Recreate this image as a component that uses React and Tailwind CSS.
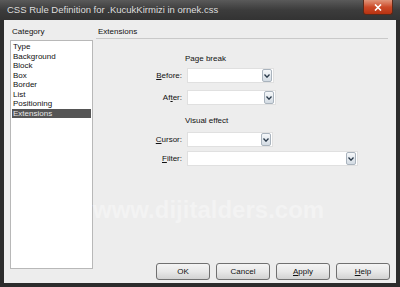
import React from "react";

function Arrow() {
  return (
    <div className="w-[10px] h-[13px] my-auto mr-px border border-[#a9b3bd] rounded-[2px] bg-gradient-to-b from-[#f6f8fa] to-[#d3dbe3] flex items-center justify-center">
      <svg width="6" height="4" viewBox="0 0 6 4">
        <path d="M0.5 0.5 L3 3.2 L5.5 0.5" fill="none" stroke="#2a3a4a" strokeWidth="1.3" />
      </svg>
    </div>
  );
}

function Select({ className }) {
  return (
    <div className={"flex h-[15px] bg-white border border-[#e0e0e0] " + className}>
      <div className="flex-1" />
      <Arrow />
    </div>
  );
}

function Row({ label, selectClass, className }) {
  return (
    <div className={"flex items-center " + className}>
      <div className="w-[90px] text-right pr-px">{label}</div>
      <div className="w-[4px]" />
      <Select className={selectClass} />
    </div>
  );
}

function Btn({ children }) {
  return (
    <div className="w-[54px] h-[17px] rounded-[3px] border border-[#707070] bg-gradient-to-b from-[#f4f4f4] via-[#e8e8e8] to-[#d2d2d2] flex items-center justify-center text-[#111]">
      {children}
    </div>
  );
}

export default function App() {
  const items = ["Type", "Background", "Block", "Box", "Border", "List", "Positioning"];
  return (
    <div className="w-[400px] h-[287px] bg-[#2c2c2c] flex flex-col font-['Liberation_Sans',Arial,sans-serif] text-[8px] leading-[10px] text-[#111] overflow-hidden">
      {/* title bar */}
      <div className="relative h-[20px] flex items-center pl-[7px] bg-gradient-to-b from-[#5a5a5a] via-[#3c3c3c] to-[#333333]">
        <span className="text-[#dedede] text-[9.5px] leading-[12px]">
          CSS Rule Definition for .KucukKirmizi in ornek.css
        </span>
        <div className="absolute left-[363px] top-0 w-[30px] h-[15px] rounded-b-[3px] border border-t-0 border-[#5a2a1a] bg-gradient-to-b from-[#e0957a] via-[#cc4a28] to-[#b83210] flex items-center justify-center">
          <svg width="8" height="7" viewBox="0 0 8 7">
            <path d="M1 0.5 L7 6.5 M7 0.5 L1 6.5" stroke="#fff" strokeWidth="1.6" />
          </svg>
        </div>
      </div>

      {/* client */}
      <div className="relative flex-1 mx-[4px] mb-[4px] bg-[#ededed] flex">
        {/* left column */}
        <div className="pl-[6px] flex flex-col">
          <div className="h-[20px] pt-[7px] pl-[2px]">Category</div>
          <div className="w-[83px] h-[229px] bg-white border border-[#b8b8b8] pt-px px-px">
            {items.map((t) => (
              <div key={t} className="h-[9.5px] leading-[9.5px] pl-px">
                {t}
              </div>
            ))}
            <div className="h-[9.5px] leading-[9.5px] pl-px bg-[#555555] text-[#e8e8e8]">Extensions</div>
          </div>
        </div>

        {/* right column */}
        <div className="flex-1 flex flex-col">
          <div className="h-[18px] pt-[7px] pl-[5px]">Extensions</div>
          <div className="h-px bg-[#c9c9c9] ml-[3px] mr-[8px]" />

          <div className="pl-[92px] mt-[15px] h-[10px]">Page break</div>
          <Row
            className="mt-[4px]"
            label={<><span className="underline">B</span>efore:</>}
            selectClass="w-[87px]"
          />
          <Row
            className="mt-[7px]"
            label={<>Af<span className="underline">t</span>er:</>}
            selectClass="w-[89px]"
          />
          <div className="pl-[92px] mt-[11px] h-[10px]">Visual effect</div>
          <Row
            className="mt-[6px]"
            label={<><span className="underline">C</span>ursor:</>}
            selectClass="w-[86px]"
          />
          <Row
            className="mt-[4px]"
            label={<><span className="underline">F</span>ilter:</>}
            selectClass="w-[171px]"
          />

          <div className="flex-1" />
          <div className="flex justify-end gap-[6px] pr-[6px] pb-[3px]">
            <Btn>OK</Btn>
            <Btn>Cancel</Btn>
            <Btn>
              <span className="underline">A</span>pply
            </Btn>
            <Btn>
              <span className="underline">H</span>elp
            </Btn>
          </div>
        </div>

        {/* watermark */}
        <div className="absolute left-[89px] top-[176px] text-[24px] leading-[28px] font-bold text-[#f3f3f3] pointer-events-none">
          www.dijitalders.com
        </div>
      </div>
    </div>
  );
}
